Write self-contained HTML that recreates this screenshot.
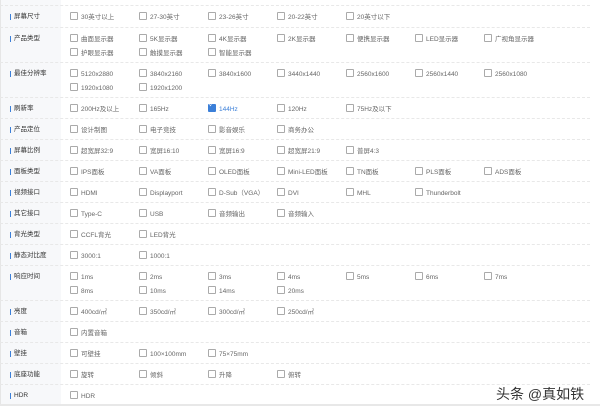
<!DOCTYPE html>
<html><head><meta charset="utf-8"><style>
body{margin:0;width:600px;height:406px;background:#fff;overflow:hidden;font-family:"Liberation Sans","Noto Sans CJK SC",sans-serif;position:relative}
#lab{position:absolute;left:0;top:0;width:60px;height:405px;background:#f7f8fa;border-left:1px solid #e6e6e6}
#bot{position:absolute;left:0;top:404px;width:600px;height:2px;background:#e8e8e8}
.row{position:absolute;left:0;width:590px;border-top:1px dashed #e8e8e8}
.l{position:absolute;left:10px;font-size:6.5px;color:#333;padding-left:3px;border-left:1.5px solid #3b7fd8;line-height:6px;height:6px}
.i{position:absolute;font-size:6.5px;color:#666;white-space:nowrap;line-height:8px}
.i:before{content:"";display:inline-block;width:6px;height:6px;border:1px solid #aaa;border-radius:1px;vertical-align:-1px;margin-right:3px;background:#fff}
.c{color:#3b7fd8}
.c:before{background:#3b7fd8;border-color:#3b7fd8}
.ck{position:absolute;left:209px;top:101px;font-size:7px;color:#fff;line-height:8px}
#wm{position:absolute;left:496px;top:384px;font-size:14px;color:#333;text-shadow:0 0 2px #fff,0 0 2px #fff}
</style></head><body>
<div id="lab"></div><div id="bot"></div>
<div id="rows"></div>
<span class="ck">✓</span>
<div id="wm">头条 @真如铁</div>
<script>
var d=[
["屏幕尺寸",5,["30英寸以上","27-30英寸","23-26英寸","20-22英寸","20英寸以下"]],
["产品类型",27,["曲面显示器","5K显示器","4K显示器","2K显示器","便携显示器","LED显示器","广视角显示器"],["护眼显示器","触摸显示器","智能显示器"]],
["最佳分辨率",62,["5120x2880","3840x2160","3840x1600","3440x1440","2560x1600","2560x1440","2560x1080"],["1920x1080","1920x1200"]],
["刷新率",97,["200Hz及以上","165Hz","144Hz","120Hz","75Hz及以下"]],
["产品定位",118,["设计制图","电子竞技","影音娱乐","商务办公"]],
["屏幕比例",139,["超宽屏32:9","宽屏16:10","宽屏16:9","超宽屏21:9","普屏4:3"]],
["面板类型",160,["IPS面板","VA面板","OLED面板","Mini-LED面板","TN面板","PLS面板","ADS面板"]],
["视频接口",181,["HDMI","Displayport","D-Sub（VGA）","DVI","MHL","Thunderbolt"]],
["其它接口",202,["Type-C","USB","音频输出","音频输入"]],
["背光类型",223,["CCFL背光","LED背光"]],
["静态对比度",244,["3000:1","1000:1"]],
["响应时间",265,["1ms","2ms","3ms","4ms","5ms","6ms","7ms"],["8ms","10ms","14ms","20ms"]],
["亮度",300,["400cd/㎡","350cd/㎡","300cd/㎡","250cd/㎡"]],
["音箱",321,["内置音箱"]],
["壁挂",342,["可壁挂","100×100mm","75×75mm"]],
["底座功能",363,["旋转","倾斜","升降","俯转"]],
["HDR",384,["HDR"]]];
var h="";
d.forEach(function(r){
 h+='<div class="row" style="top:'+r[1]+'px;height:'+(r[3]?35:21)+'px"><span class="l" style="top:8px">'+r[0]+'</span>';
 r[2].forEach(function(t,k){h+='<span class="i'+(t=="144Hz"?' c':'')+'" style="left:'+(70+69*k)+'px;top:6px">'+t+'</span>';});
 if(r[3])r[3].forEach(function(t,k){h+='<span class="i" style="left:'+(70+69*k)+'px;top:20px">'+t+'</span>';});
 h+='</div>';
});
document.getElementById("rows").innerHTML=h;
</script>
</body></html>
